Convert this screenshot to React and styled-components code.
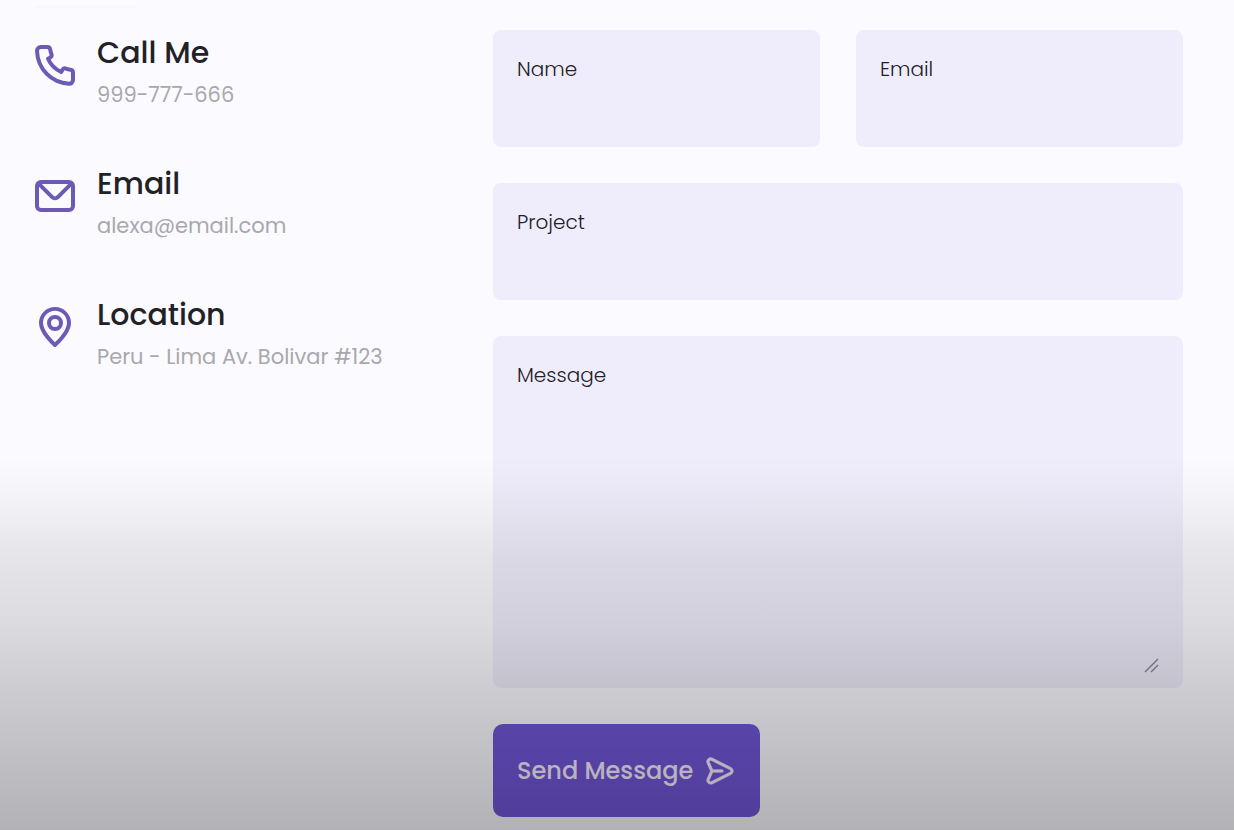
import React from "react";
import styled, { createGlobalStyle } from "styled-components";

const GlobalStyle = createGlobalStyle`
  *, *::before, *::after { box-sizing: border-box; }
  body {
    margin: 0;
    background: #fbfaff;
    color: #222126;
    font-family: Poppins, Inter, "Liberation Sans", sans-serif;
  }
`;

const Page = styled.main`
  position: relative;
  min-height: 100vh;
  padding: 6px 51px 12px 31px;
`;

const Shade = styled.div`
  position: absolute;
  inset: 0;
  pointer-events: none;
  background: linear-gradient(
    to bottom,
    rgba(0, 0, 0, 0) 55%,
    rgba(0, 0, 0, 0.025) 59%,
    rgba(0, 0, 0, 0.085) 67%,
    rgba(0, 0, 0, 0.125) 75%,
    rgba(0, 0, 0, 0.185) 83%,
    rgba(0, 0, 0, 0.29) 100%
  );
`;

const Divider = styled.hr`
  width: 102px;
  height: 2px;
  margin: 0 0 22px 4px;
  border: 0;
  background: #f8f7fb;
`;

const Contact = styled.section`
  display: grid;
  grid-template-columns: 426px minmax(0, 1fr);
  column-gap: 36px;
`;

const InfoList = styled.div`
  display: flex;
  flex-direction: column;
  gap: 46px;
`;

const InfoItem = styled.article`
  display: flex;
  gap: 18px;
`;

const InfoIcon = styled.svg`
  flex: none;
  width: 48px;
  height: 48px;
  margin-top: 11px;
  fill: ${(p) => (p.$outline ? "none" : "#6c5ab4")};
  stroke: ${(p) => (p.$outline ? "#6c5ab4" : "none")};
  stroke-width: 2;
  stroke-linejoin: round;
`;

const InfoTitle = styled.h3`
  margin: 0;
  font-size: 30px;
  line-height: 45px;
  font-weight: 500;
`;

const InfoText = styled.p`
  margin: 0;
  font-size: 21px;
  line-height: 40px;
  color: #a9a8ac;
`;

const Form = styled.form`
  display: flex;
  flex-direction: column;
  align-items: stretch;
  gap: 36px;
`;

const FieldRow = styled.div`
  display: grid;
  grid-template-columns: 1fr 1fr;
  gap: 36px;
`;

const Field = styled.div`
  position: relative;
  display: flex;
  flex-direction: column;
  padding: ${(p) => (p.$tall ? "24px 24px 15px" : "24px")};
  border-radius: 8px;
  background: #efedfb;
`;

const Label = styled.label`
  font-size: 20px;
  line-height: 30px;
  font-weight: 300;
  color: #222026;
`;

const Input = styled.input`
  width: 100%;
  height: 39px;
  padding: 0;
  border: 0;
  outline: 0;
  background: transparent;
  color: inherit;
  font: inherit;
  font-size: 20px;
`;

const TextArea = styled.textarea`
  display: block;
  width: 100%;
  height: 283px;
  padding: 0;
  border: 0;
  outline: 0;
  resize: vertical;
  background: transparent;
  color: inherit;
  font: inherit;
  font-size: 20px;

  &::-webkit-resizer {
    background: transparent;
  }
`;

const ResizeGrip = styled.svg`
  position: absolute;
  right: 24px;
  bottom: 15px;
  width: 15px;
  height: 15px;
  pointer-events: none;
  fill: none;
  stroke: #85838f;
  stroke-width: 1.4;
`;

const SendButton = styled.button`
  display: inline-flex;
  align-items: center;
  align-self: flex-start;
  gap: 11px;
  height: 93px;
  padding: 0 24px;
  border: 0;
  border-radius: 10px;
  background: #7056d6;
  color: #f6ecff;
  font: inherit;
  font-size: 24px;
  font-weight: 500;
  cursor: pointer;
`;

const SendIcon = styled.svg`
  width: 32px;
  height: 32px;
  fill: currentColor;
  stroke: currentColor;
  stroke-width: 0.4;
`;

const contacts = [
  {
    title: "Call Me",
    text: "999-777-666",
    outline: true,
    path: "M5 3h3.1c.8 0 1.4.5 1.5 1.3.1.8.3 1.5.6 2.2.3.8 0 1.5-.7 1.8l-1 .6c1.3 2.9 3.7 5.3 6.6 6.6l.6-1c.3-.7 1-1 1.8-.7.7.3 1.4.5 2.2.6.8.1 1.3.7 1.3 1.5V19.4c0 1.2-.9 2.1-2 2C10 20.8 3.4 14 3 5 3 3.9 3.8 3 5 3z",
  },
  {
    title: "Email",
    text: "alexa@email.com",
    path: "M19,4H5A3,3,0,0,0,2,7V17a3,3,0,0,0,3,3H19a3,3,0,0,0,3-3V7A3,3,0,0,0,19,4Zm-.41,2-5.88,5.88a1,1,0,0,1-1.42,0L5.41,6ZM20,17a1,1,0,0,1-1,1H5a1,1,0,0,1-1-1V7.41l5.88,5.88a3,3,0,0,0,4.24,0L20,7.41Z",
  },
  {
    title: "Location",
    text: "Peru - Lima Av. Bolivar #123",
    path: "M12,2a8,8,0,0,0-8,7.92c0,5.48,7.05,11.58,7.35,11.84a1,1,0,0,0,1.3,0C13,21.5,20,15.4,20,9.92A8,8,0,0,0,12,2Zm0,17.65c-1.67-1.59-6-6-6-9.73a6,6,0,0,1,12,0C18,13.7,13.67,18.06,12,19.65ZM12,6a4,4,0,1,0,4,4A4,4,0,0,0,12,6Zm0,6a2,2,0,1,1,2-2A2,2,0,0,1,12,12Z",
  },
];

export default function App() {
  return (
    <>
      <GlobalStyle />
      <Page>
        <Divider />
        <Contact>
          <InfoList>
            {contacts.map((c) => (
              <InfoItem key={c.title}>
                <InfoIcon $outline={c.outline} viewBox="0 0 24 24" aria-hidden="true">
                  <path d={c.path} />
                </InfoIcon>
                <div>
                  <InfoTitle>{c.title}</InfoTitle>
                  <InfoText>{c.text}</InfoText>
                </div>
              </InfoItem>
            ))}
          </InfoList>
          <Form onSubmit={(e) => e.preventDefault()}>
            <FieldRow>
              <Field>
                <Label htmlFor="name">Name</Label>
                <Input id="name" type="text" />
              </Field>
              <Field>
                <Label htmlFor="email">Email</Label>
                <Input id="email" type="email" />
              </Field>
            </FieldRow>
            <Field>
              <Label htmlFor="project">Project</Label>
              <Input id="project" type="text" />
            </Field>
            <Field $tall>
              <Label htmlFor="message">Message</Label>
              <TextArea id="message" />
              <ResizeGrip viewBox="0 0 15 15" aria-hidden="true">
                <path d="M1 14 14 1M7 14l7-7" />
              </ResizeGrip>
            </Field>
            <SendButton type="submit">
              Send Message
              <SendIcon viewBox="0 0 24 24" aria-hidden="true">
                <path d="M20.34,9.32l-14-7a3,3,0,0,0-4.08,3.9l2.4,5.37h0a1.06,1.06,0,0,1,0,.82l-2.4,5.37A3,3,0,0,0,5,22a3.14,3.14,0,0,0,1.35-.32l14-7a3,3,0,0,0,0-5.36Zm-.89,3.57-14,7a1,1,0,0,1-1.35-1.3l2.39-5.37A2,2,0,0,0,6.57,13h6.89a1,1,0,0,0,0-2H6.57a2,2,0,0,0-.08-.22L4.1,5.41a1,1,0,0,1,1.35-1.3l14,7a1,1,0,0,1,0,1.78Z" />
              </SendIcon>
            </SendButton>
          </Form>
        </Contact>
        <Shade />
      </Page>
    </>
  );
}
